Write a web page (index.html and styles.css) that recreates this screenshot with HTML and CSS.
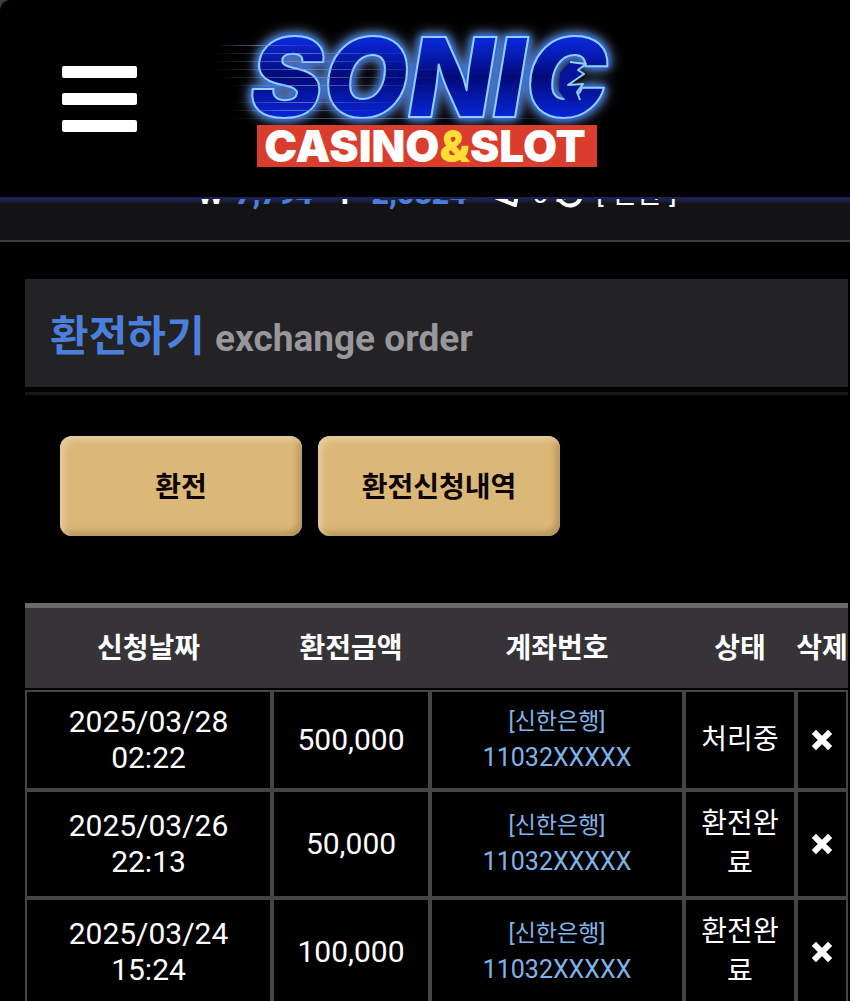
FILE: index.html
```html
<!DOCTYPE html>
<html lang="ko">
<head>
    <meta charset="UTF-8">
    <meta name="viewport" content="width=device-width, initial-scale=1.0">
    <title>환전하기</title>
    <link rel="stylesheet" href="styles.css">
</head>
<body>
    <header class="header">
        <button type="button" class="menu-button" aria-label="메뉴">
            <span class="bar"></span>
            <span class="bar"></span>
            <span class="bar"></span>
        </button>
        <a href="#" class="logo" aria-label="Sonic Casino &amp; Slot">
            <svg width="450" height="165" viewBox="0 0 450 165">
                <defs>
                    <linearGradient id="speed">
                        <stop offset="0" stop-color="#8a90c8" stop-opacity="0"/>
                        <stop offset="0.4" stop-color="#8a90c8" stop-opacity="0.7"/>
                        <stop offset="1" stop-color="#3a50d0" stop-opacity="0.1"/>
                    </linearGradient>
                    <linearGradient id="letter" x1="0" y1="0" x2="0" y2="1">
                        <stop offset="0.2" stop-color="#0a2ae0"/>
                        <stop offset="0.5" stop-color="#020a78"/>
                        <stop offset="0.8" stop-color="#0826d8"/>
                    </linearGradient>
                </defs>
                <text class="sonic" x="50" y="102">SONIC</text>
                <!-- quills inside the C -->
                <path d="M370 47 L386 49 L378 55 L384 59 L368 70 L383 69 L377 77 L380 85 L366 86 L359 76 L360 58 Z" fill="#06149c"/>
                <path d="M370 47 L386 49 L378 55 L384 59 L368 70 L383 69 L377 77 L380 85" fill="none" stroke="#8fd0ff" stroke-width="2" stroke-linejoin="round"/>
                <g fill="url(#speed)">
                    <rect x="18" y="30" width="100" height="1"/>
                    <rect x="14" y="38" width="210" height="1"/>
                    <rect x="14" y="46" width="200" height="1"/>
                    <rect x="14" y="54" width="230" height="1"/>
                    <rect x="18" y="62" width="220" height="1"/>
                    <rect x="28" y="70" width="200" height="1"/>
                    <rect x="32" y="87" width="170" height="1"/>
                    <rect x="30" y="95" width="150" height="1"/>
                    <rect x="30" y="103" width="340" height="1"/>
                </g>
                <rect x="57" y="110" width="340" height="42" fill="#da3d2b"/>
                <text class="slot" x="225" y="147" text-anchor="middle">CASINO<tspan fill="#ffdc38">&amp;</tspan>SLOT</text>
            </svg>
        </a>
    </header>

    <div class="user-bar">
        <div class="user-info">
            <span class="money">W <b>7,794</b></span>
            <span class="point">P <b>2,0824</b></span>
            <span class="message">
                <svg width="26" height="26" viewBox="0 0 26 26" fill="none" stroke="#fff" stroke-width="4"><path d="M2 17 L20 24 L24 3 Z M9 20 L23 4"/></svg>
                0
            </span>
            <a href="#" class="convert">
                <svg width="28" height="28" viewBox="0 0 28 28" fill="none" stroke="#fff" stroke-width="4"><path d="M3 16 A11 11 0 1 0 7 6 M2 22 L4 15 L10 18"/></svg>
                [ 전환 ]
            </a>
        </div>
    </div>

    <main class="content">
        <h1 class="page-title">환전하기 <small>exchange order</small></h1>

        <div class="tabs">
            <button type="button" class="tab-button">환전</button>
            <button type="button" class="tab-button">환전신청내역</button>
        </div>

        <table class="history">
            <colgroup>
                <col class="col-date">
                <col class="col-amount">
                <col class="col-account">
                <col class="col-status">
                <col class="col-delete">
            </colgroup>
            <thead>
                <tr>
                    <th>신청날짜</th>
                    <th>환전금액</th>
                    <th>계좌번호</th>
                    <th>상태</th>
                    <th>삭제</th>
                </tr>
            </thead>
            <tbody>
                <tr>
                    <td class="date">2025/03/28 02:22</td>
                    <td class="amount">500,000</td>
                    <td class="account"><span class="bank">[신한은행]</span> 11032XXXXX</td>
                    <td class="status">처리중</td>
                    <td class="delete"><button type="button" class="delete-button" aria-label="삭제"><svg width="22" height="22" viewBox="0 0 22 22"><path d="M5 5 L17 17 M17 5 L5 17"/></svg></button></td>
                </tr>
                <tr>
                    <td class="date">2025/03/26 22:13</td>
                    <td class="amount">50,000</td>
                    <td class="account"><span class="bank">[신한은행]</span> 11032XXXXX</td>
                    <td class="status">환전완료</td>
                    <td class="delete"><button type="button" class="delete-button" aria-label="삭제"><svg width="22" height="22" viewBox="0 0 22 22"><path d="M5 5 L17 17 M17 5 L5 17"/></svg></button></td>
                </tr>
                <tr>
                    <td class="date">2025/03/24 15:24</td>
                    <td class="amount">100,000</td>
                    <td class="account"><span class="bank">[신한은행]</span> 11032XXXXX</td>
                    <td class="status">환전완료</td>
                    <td class="delete"><button type="button" class="delete-button" aria-label="삭제"><svg width="22" height="22" viewBox="0 0 22 22"><path d="M5 5 L17 17 M17 5 L5 17"/></svg></button></td>
                </tr>
            </tbody>
        </table>
    </main>
</body>
</html>
```
FILE: styles.css
```css
:root {
    --blue: #4a80dc;
    --line: #454446;
    --gold: #dbb877;
}

* {
    box-sizing: border-box;
}

html {
    background-color: #3c3c3c;
}

body {
    margin: 0;
    height: 100vh;
    overflow: hidden;
    border-top-left-radius: 10px;
    background-color: #000;
    color: #fff;
    font-family: Roboto, "Noto Sans CJK KR", sans-serif;
}

button {
    border: none;
    font-family: inherit;
    cursor: pointer;
}

.header {
    display: flex;
    align-items: flex-start;
    gap: 63px;
    height: 199px;
    padding: 15px 0 0 62px;
    border-bottom: 2px solid #1c2050;
}

.menu-button {
    display: flex;
    flex-direction: column;
    gap: 15px;
    width: 75px;
    margin-top: 51px;
    padding: 0;
    background: none;
}

.bar {
    height: 12px;
    border-radius: 2px;
    background-color: #fff;
}

.logo svg {
    display: block;
}

.sonic {
    font-family: Inter, sans-serif;
    font-size: 110px;
    font-weight: 900;
    font-style: italic;
    fill: url(#letter);
    stroke: #8fd0ff;
    stroke-width: 2px;
    stroke-linejoin: round;
    filter: drop-shadow(0 0 2px #2a66dd) drop-shadow(0 0 3px #2a66dd) drop-shadow(0 0 6px #7c9cd4);
}

.slot {
    font-family: Inter, sans-serif;
    font-size: 44px;
    font-weight: 900;
    fill: #fff;
}

.user-bar {
    display: flex;
    justify-content: center;
    align-items: flex-end;
    height: 43px;
    padding: 0 0 28px 24px;
    overflow: hidden;
    border-bottom: 2px solid #3a3a3b;
    background: linear-gradient(#1e2450, #131315 5px);
}

.user-info {
    display: flex;
    gap: 28px;
    font-size: 30px;
    line-height: 36px;
    white-space: nowrap;
}

.money,
.point {
    font-weight: 700;
}

.money b,
.point b {
    margin-left: 4px;
    color: var(--blue);
}

.message,
.convert {
    display: flex;
    align-items: center;
    gap: 12px;
    color: #fff;
    font-size: 28px;
    text-decoration: none;
}

.convert {
    margin-left: -20px;
}

.content {
    padding: 37px 2px 0 25px;
}

.page-title {
    position: relative;
    margin: 0 0 49px;
    padding: 28px 25px 18px;
    background-color: #232224;
    color: var(--blue);
    font-size: 42px;
    line-height: 60px;
}

.page-title::after {
    content: "";
    position: absolute;
    left: 0;
    right: 0;
    bottom: -8px;
    height: 3px;
    background-color: #171719;
}

.page-title small {
    color: #98979b;
    font-size: 37px;
}

.tabs {
    display: flex;
    gap: 16px;
    margin-bottom: 67px;
    padding-left: 35px;
}

.tab-button {
    width: 242px;
    height: 100px;
    padding: 0 0 3px;
    border-radius: 12px;
    background-color: var(--gold);
    box-shadow: inset 4px 4px 6px #e6cb9d, inset -4px -4px 6px #b3945c;
    color: #0c0404;
    font-size: 28px;
    font-weight: 700;
}

.history {
    width: 100%;
    border-collapse: separate;
    border-spacing: 0;
    table-layout: fixed;
    text-align: center;
}

.col-date {
    width: 247px;
}

.col-amount {
    width: 158px;
}

.col-status {
    width: 112px;
}

.col-delete {
    width: 52px;
}

.history th {
    height: 87px;
    padding: 0 0 4px;
    border-top: 5px solid #6b696c;
    border-bottom: 2px solid #000;
    background-color: #363437;
    font-size: 28px;
    font-weight: 700;
    white-space: nowrap;
}

.history td {
    padding: 12px;
    border: 2px solid var(--line);
    font-size: 30px;
    line-height: 36px;
}

.history .account {
    color: #80b3ea;
    font-size: 25px;
}

.bank {
    display: block;
    font-size: 23px;
}

.history .status {
    font-size: 28px;
    line-height: 40px;
    word-break: break-all;
}

.history .delete {
    padding: 0;
}

.delete-button {
    display: block;
    margin: 0 auto;
    padding: 0;
    background: none;
}

.delete-button svg {
    display: block;
    stroke: #fff;
    stroke-width: 6px;
    stroke-linecap: square;
}
```
